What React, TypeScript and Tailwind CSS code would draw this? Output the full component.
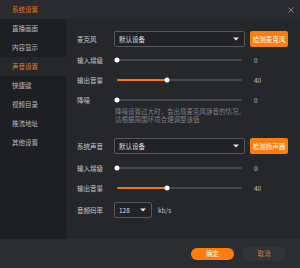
import React from "react";

const menu = ["直播画面", "内容显示", "声音设置", "快捷键", "视频目录", "推流地址", "其他设置"];

function Caret() {
  return (
    <svg width="6" height="4" viewBox="0 0 6 4" className="shrink-0">
      <path d="M0 0.5 L6 0.5 L3 3.5 Z" fill="#e5e5e5" />
    </svg>
  );
}

function Select({ value, w }: { value: string; w: string }) {
  return (
    <div className={`${w} h-[16px] flex items-center justify-between rounded-[2px] border border-[#55575c] bg-[#222327] pl-[4px] pr-[5px] text-[#dcdcdc]`}>
      <span>{value}</span>
      <Caret />
    </div>
  );
}

function Slider({ pct }: { pct: number }) {
  return (
    <div className="w-[131px] h-full flex items-center px-[3px]">
      <div className="relative w-full h-[2px] rounded-full bg-[#45474c]">
        <div className="absolute left-0 top-0 h-[2px] rounded-full bg-[#f07a10]" style={{ width: `${pct}%` }} />
        <div
          className="absolute top-1/2 w-[5px] h-[5px] -translate-y-1/2 -translate-x-1/2 rounded-full bg-white"
          style={{ left: `${pct}%` }}
        />
      </div>
    </div>
  );
}

function Row({ label, children, h = "h-[20px]" }: { label: string; children: React.ReactNode; h?: string }) {
  return (
    <div className={`flex items-center ${h}`}>
      <div className="w-[37px] shrink-0 text-[#c4c4c4]">{label}</div>
      {children}
    </div>
  );
}

function SliderRow({ label, pct, value }: { label: string; pct: number; value: string }) {
  return (
    <Row label={label}>
      <Slider pct={pct} />
      <span className="ml-[9px] text-[#c4c4c4]">{value}</span>
    </Row>
  );
}

function DetectButton({ text }: { text: string }) {
  return (
    <div className="ml-[5px] w-[38px] h-[16px] flex items-center justify-center rounded-[2px] bg-[#ff7d0a] text-white">
      {text}
    </div>
  );
}

export default function App() {
  return (
    <div
      className="w-[300px] h-[268px] flex flex-col bg-[#26272b] text-[6.5px] leading-none overflow-hidden"
      style={{ fontFamily: '"Noto Sans CJK SC", "Noto Sans", sans-serif' }}
    >
      <div className="h-[19px] shrink-0 flex items-center justify-between bg-[#2a2b30] pl-[12px] pr-[6px]">
        <span className="text-[#e8780e]">系统设置</span>
        <svg width="6" height="6" viewBox="0 0 6 6">
          <path d="M0.5 0.5 L5.5 5.5 M5.5 0.5 L0.5 5.5" stroke="#8a8b8f" strokeWidth="0.9" />
        </svg>
      </div>

      <div className="flex flex-1 min-h-0">
        <div className="w-[66px] shrink-0 bg-[#1e1f23]">
          {menu.map((m) => (
            <div
              key={m}
              className={`h-[19px] flex items-center pl-[12px] ${
                m === "声音设置" ? "bg-[#26272b] text-[#ee7b12]" : "text-[#b9b9b9]"
              }`}
            >
              {m}
            </div>
          ))}
        </div>

        <div className="flex-1 pl-[11px] pt-[12px]">
          <Row label="麦克风" h="h-[16px]">
            <Select value="默认设备" w="w-[131px]" />
            <DetectButton text="检测麦克风" />
          </Row>
          <div className="mt-[3px]">
            <SliderRow label="输入增级" pct={0} value="0" />
            <SliderRow label="输出音量" pct={40} value="40" />
            <SliderRow label="降噪" pct={0} value="0" />
          </div>
          <div className="-mt-[3px] ml-[38px] text-[#7e7f83] leading-[8px]">
            <div>降噪设置过大时，会出现麦克风静音的情况。</div>
            <div>请根据周围环境合理调整该值</div>
          </div>

          <div className="mt-[15px]">
            <Row label="系统声音" h="h-[16px]">
              <Select value="默认设备" w="w-[131px]" />
              <DetectButton text="检测扬声器" />
            </Row>
          </div>
          <div className="mt-[4px]">
            <SliderRow label="输入增级" pct={0} value="0" />
            <SliderRow label="输出音量" pct={40} value="40" />
          </div>
          <div className="mt-[4px]">
            <Row label="音频码率" h="h-[16px]">
              <Select value="128" w="w-[38px]" />
              <span className="ml-[6px] text-[#c4c4c4]">kb/s</span>
            </Row>
          </div>
        </div>
      </div>

      <div className="h-[29px] shrink-0 flex items-center justify-end gap-[8px] bg-[#2c2d31] pr-[14px]">
        <div className="w-[43px] h-[12px] flex items-center justify-center rounded-full bg-[#ff7d0a] text-white">
          确定
        </div>
        <div className="w-[44px] h-[14px] flex items-center justify-center rounded-full bg-[#30333a] text-[#d07a25]">
          取消
        </div>
      </div>
    </div>
  );
}
